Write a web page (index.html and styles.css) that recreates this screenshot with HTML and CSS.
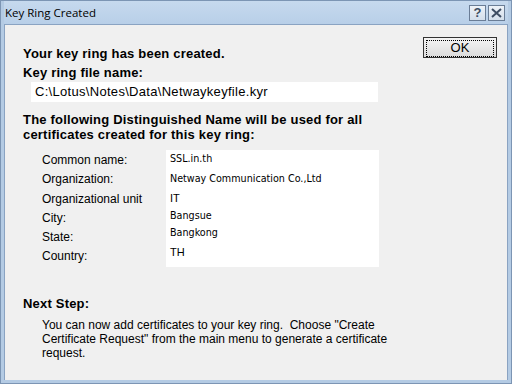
FILE: index.html
```html
<!DOCTYPE html>
<html>
<head>
<meta charset="utf-8">
<link rel="stylesheet" href="styles.css">
</head>
<body>
<div class="window">
  <div class="titlebar">
    <span class="title">Key Ring Created</span>
    <div class="tbtns">
      <span class="tbtn">?</span>
      <span class="tbtn"><svg width="11" height="10" viewBox="0 0 11 10"><path d="M1 1 L10 9 M10 1 L1 9" stroke="#3d4d63" stroke-width="2" fill="none"/></svg></span>
    </div>
  </div>
  <div class="body">
    <div class="main">
      <p class="h first">Your key ring has been created.</p>
      <p class="h">Key ring file name:</p>
      <div class="path">C:\Lotus\Notes\Data\Netwaykeyfile.kyr</div>
      <p class="h two">The following Distinguished Name will be used for all certificates created for this key ring:</p>
      <div class="dn">
        <div class="labels">
          <span>Common name:</span>
          <span>Organization:</span>
          <span>Organizational unit</span>
          <span>City:</span>
          <span>State:</span>
          <span>Country:</span>
        </div>
        <div class="values">
          <span class="v1">SSL.in.th</span>
          <span class="v2">Netway Communication Co.,Ltd</span>
          <span class="v3 plain">IT</span>
          <span class="v4">Bangsue</span>
          <span class="v5">Bangkong</span>
          <span class="v6 plain">TH</span>
        </div>
      </div>
      <p class="h next">Next Step:</p>
      <p class="para">You can now add certificates to your key ring.&nbsp; Choose "Create Certificate Request" from the main menu to generate a certificate request.</p>
    </div>
    <div class="side">
      <button class="ok"><span>OK</span></button>
    </div>
  </div>
</div>
</body>
</html>
```
FILE: styles.css
```css
html, body { margin: 0; padding: 0; }
body { width: 512px; height: 384px; overflow: hidden; font-family: "Liberation Sans", Arial, sans-serif; }
.window {
  width: 512px; height: 384px; box-sizing: border-box;
  background: #b4cbe4;
  border: 1px solid #7c95b4;
  padding: 0 3px 3px 3px;
  display: flex; flex-direction: column;
}
.titlebar {
  height: 23px; display: flex; align-items: center; justify-content: space-between;
  background: linear-gradient(#c6d9ee, #b8cfe8);
}
.title { font-family: "Open Sans", "Noto Sans", sans-serif; font-size: 11.5px; color: #000; padding-left: 1px; margin-top: 0px; }
.tbtns { display: flex; gap: 2px; margin-right: 3px; margin-top: 0px; }
.tbtn {
  width: 17px; height: 16px; box-sizing: border-box;
  border: 1px solid #6a7d96; background: linear-gradient(#edf2f8, #d3deeb);
  display: flex; align-items: center; justify-content: center;
  font: bold 13px "Liberation Sans", sans-serif; color: #3d4d63;
}
.body {
  flex: 1; background: #f0f0f0; display: flex;
  border: 1px solid #8aa3c2; border-bottom: none;
}
.main { flex: 1; padding-left: 18px; }
p { margin: 0; }
.h { font-weight: bold; font-size: 13px; color: #000; line-height: 15px; letter-spacing: 0.2px; }
.first { margin-top: 21px; }
.h + .h { margin-top: 4px; }
.path {
  margin: 2px 0 0 8px; width: 347px; height: 20px; background: #fff;
  font-size: 13px; line-height: 20px; padding-left: 4px; box-sizing: border-box; letter-spacing: 0.3px;
}
.two { margin-top: 10px; line-height: 15px; width: 360px; }
.dn { display: flex; margin-top: 8px; }
.labels {
  width: 124px; padding-left: 19px; display: flex; flex-direction: column;
  font-size: 12px; line-height: 19.3px; padding-top: 1px;
}
.values {
  width: 213px; height: 117px; background: #fff; display: flex; flex-direction: column;
  font-family: "DejaVu Sans", Verdana, sans-serif; font-size: 9.6px; padding: 3px 0 0 4px; box-sizing: border-box;
}
.values span { height: 18.2px; line-height: 12px; }
.values .plain { font-family: "Liberation Sans", Arial, sans-serif; font-size: 11px; }
.v1 { height: 20px !important; }
.v2 { height: 19px !important; }
.v3 { height: 18px !important; }
.v4 { height: 17px !important; }
.v5 { height: 19px !important; }
.next { margin-top: 29px; }
.para { font-size: 12px; line-height: 14px; margin: 7px 0 0 19px; width: 356px; }
.side { width: 84px; padding-top: 12px; }
.ok {
  width: 74px; height: 21px; padding: 2px; box-sizing: border-box;
  border: 1px solid #333; background: linear-gradient(#f4f4f4, #dcdcdc);
  font: 13px "Liberation Sans", sans-serif; color: #000;
}
.ok span { display: block; border: 1px dotted #000; height: 15px; line-height: 14px; }
```
